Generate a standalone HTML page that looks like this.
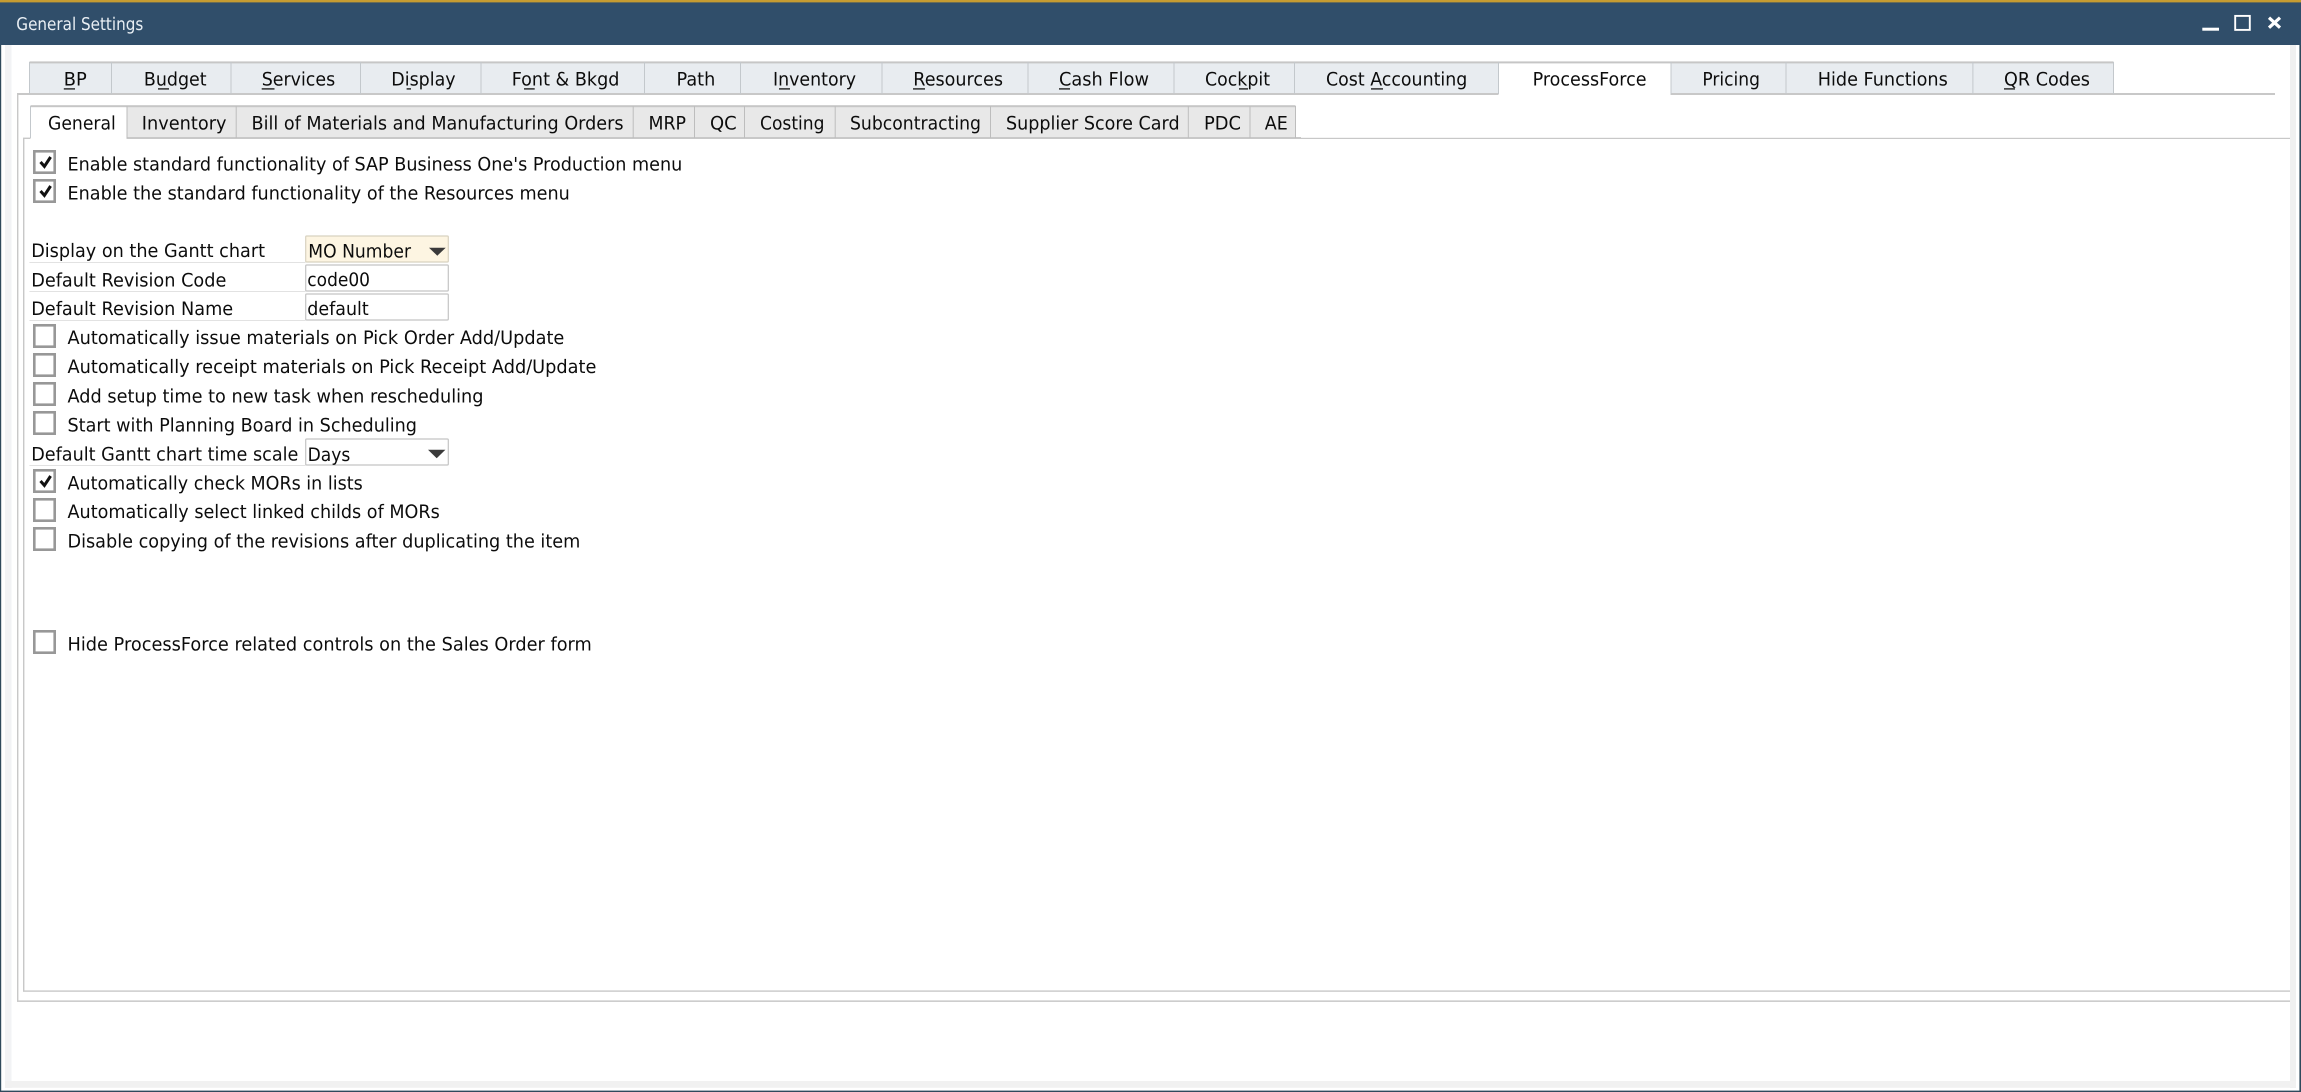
<!DOCTYPE html>
<html lang="en"><head><meta charset="utf-8"><title>General Settings</title>
<style>
html,body{margin:0;padding:0;background:#fff;width:2301px;height:1092px;overflow:hidden}
svg{display:block}
text{font-family:"DejaVu Sans",sans-serif;font-size:18.6px;fill:#0c0c0c;text-rendering:geometricPrecision}
.mt{fill:#e8ecf0}
.st{fill:#e8e8e8}
.cb{fill:#fff;stroke:#989898;stroke-width:2.6}
.ck{fill:none;stroke:#111;stroke-width:3}
.u{fill:#222}
.sep{fill:#c3c8cc}
.ln{fill:#c8c8c8}
.lab{fill:#e2e2e2}
.fld{fill:#fff;stroke:#c4c4c4;stroke-width:1.2}
</style></head><body>
<svg width="2301" height="1092" viewBox="0 0 2301 1092" xmlns="http://www.w3.org/2000/svg">
<rect width="2301" height="1092" fill="#fff"/>
<!-- window frame -->
<rect x="0" y="0" width="1.2" height="1092" fill="#2f4a5c"/>
<rect x="2299.4" y="0" width="1.6" height="1092" fill="#2f4a5c"/>
<rect x="0" y="1090.6" width="2301" height="1.4" fill="#2f4a5c"/>
<rect x="5" y="45" width="6.5" height="1043" fill="#f2f3f5"/>
<rect x="2290" y="45" width="6" height="1043" fill="#f0f0f0"/>
<rect x="5" y="1081" width="2291" height="6.8" fill="#f1f1f1"/>
<!-- title bar -->
<rect x="0" y="0" width="2301" height="45" fill="#304e6a"/>
<rect x="0" y="0" width="2301" height="2.4" fill="#c69c31"/>
<text x="16.3" y="30" textLength="127" lengthAdjust="spacingAndGlyphs" style="fill:#e9eff4;font-size:17.5px">General Settings</text>
<rect x="2202.3" y="27.7" width="16.7" height="3" fill="#fff"/>
<rect x="2235.2" y="15.9" width="14.6" height="14" fill="none" stroke="#fff" stroke-width="1.9"/>
<path d="M2269 17.7L2280 27.7M2280 17.7L2269 27.7" stroke="#fff" stroke-width="3.2" fill="none"/>
<!-- main tabs -->
<rect x="29.5" y="62" width="2084" height="32" class="mt"/>
<rect x="1498.5" y="62" width="172" height="34" fill="#fff"/>
<rect x="29.5" y="61.4" width="2084" height="2" fill="#c6c6c6"/>
<rect x="17" y="93" width="1481.5" height="2" class="ln"/>
<rect x="1670.5" y="93" width="604.5" height="2" class="ln"/>
<rect x="29" y="62" width="1" height="32" class="sep"/>
<rect x="111" y="62" width="1" height="32" class="sep"/>
<rect x="230.5" y="62" width="1" height="32" class="sep"/>
<rect x="360" y="62" width="1" height="32" class="sep"/>
<rect x="480.5" y="62" width="1" height="32" class="sep"/>
<rect x="644" y="62" width="1" height="32" class="sep"/>
<rect x="740" y="62" width="1" height="32" class="sep"/>
<rect x="881.5" y="62" width="1" height="32" class="sep"/>
<rect x="1027.5" y="62" width="1" height="32" class="sep"/>
<rect x="1173.5" y="62" width="1" height="32" class="sep"/>
<rect x="1294" y="62" width="1" height="32" class="sep"/>
<rect x="1498" y="62" width="1" height="32" class="sep"/>
<rect x="1670.5" y="62" width="1" height="32" class="sep"/>
<rect x="1785.5" y="62" width="1" height="32" class="sep"/>
<rect x="1972.4" y="62" width="1" height="32" class="sep"/>
<rect x="2113" y="62" width="1" height="32" class="sep"/>
<text x="63.8" y="85.5" textLength="23" lengthAdjust="spacingAndGlyphs">BP</text>
<text x="143.9" y="85.5" textLength="62.7" lengthAdjust="spacingAndGlyphs">Budget</text>
<text x="261.7" y="85.5" textLength="73.5" lengthAdjust="spacingAndGlyphs">Services</text>
<text x="391.3" y="85.5" textLength="64.3" lengthAdjust="spacingAndGlyphs">Display</text>
<text x="511.7" y="85.5" textLength="107.7" lengthAdjust="spacingAndGlyphs">Font &amp; Bkgd</text>
<text x="676.5" y="85.5" textLength="38.8" lengthAdjust="spacingAndGlyphs">Path</text>
<text x="773" y="85.5" textLength="83" lengthAdjust="spacingAndGlyphs">Inventory</text>
<text x="913.3" y="85.5" textLength="89.7" lengthAdjust="spacingAndGlyphs">Resources</text>
<text x="1059" y="85.5" textLength="90" lengthAdjust="spacingAndGlyphs">Cash Flow</text>
<text x="1205" y="85.5" textLength="65" lengthAdjust="spacingAndGlyphs">Cockpit</text>
<text x="1326" y="85.5" textLength="141.3" lengthAdjust="spacingAndGlyphs">Cost Accounting</text>
<text x="1532.6" y="85.5" textLength="113.9" lengthAdjust="spacingAndGlyphs">ProcessForce</text>
<text x="1702.4" y="85.5" textLength="57.6" lengthAdjust="spacingAndGlyphs">Pricing</text>
<text x="1817.7" y="85.5" textLength="130.1" lengthAdjust="spacingAndGlyphs">Hide Functions</text>
<text x="2004" y="85.5" textLength="86" lengthAdjust="spacingAndGlyphs">QR Codes</text>
<!-- underlined mnemonics -->
<rect x="63.8" y="88.2" width="11.2" height="1.4" class="u"/>
<rect x="158" y="88.2" width="11" height="1.4" class="u"/>
<rect x="261.7" y="88.2" width="12.8" height="1.4" class="u"/>
<rect x="406.6" y="88.2" width="4.4" height="1.4" class="u"/>
<rect x="524" y="88.2" width="10.7" height="1.4" class="u"/>
<rect x="779" y="88.2" width="11" height="1.4" class="u"/>
<rect x="913" y="88.2" width="12" height="1.4" class="u"/>
<rect x="1059" y="88.2" width="11" height="1.4" class="u"/>
<rect x="1239" y="88.2" width="9" height="1.4" class="u"/>
<rect x="1371" y="88.2" width="12" height="1.4" class="u"/>
<rect x="2004" y="88.2" width="11" height="1.4" class="u"/>
<!-- outer panel -->
<rect x="17" y="94" width="1.4" height="907.5" class="ln"/>
<rect x="17" y="1000.4" width="2273" height="1.5" class="ln"/>
<!-- sub tabs -->
<rect x="126.5" y="106" width="1169" height="32" class="st"/>
<rect x="30.5" y="105.2" width="1265" height="2" fill="#c6c6c6"/>
<rect x="23" y="137.6" width="7.5" height="1.4" class="ln"/>
<rect x="126.5" y="137" width="1174.5" height="2" class="ln"/>
<rect x="1301" y="137.8" width="989" height="1.2" class="ln"/>
<rect x="30" y="106" width="1" height="32" class="sep"/>
<rect x="126.5" y="106" width="1" height="32" fill="#bdbdbd"/>
<rect x="235.7" y="106" width="1" height="32" fill="#bdbdbd"/>
<rect x="632.7" y="106" width="1" height="32" fill="#bdbdbd"/>
<rect x="694" y="106" width="1" height="32" fill="#bdbdbd"/>
<rect x="744" y="106" width="1" height="32" fill="#bdbdbd"/>
<rect x="834.7" y="106" width="1" height="32" fill="#bdbdbd"/>
<rect x="990" y="106" width="1" height="32" fill="#bdbdbd"/>
<rect x="1187.8" y="106" width="1" height="32" fill="#bdbdbd"/>
<rect x="1249.5" y="106" width="1" height="32" fill="#bdbdbd"/>
<rect x="1295" y="106" width="1" height="32" fill="#bdbdbd"/>
<text x="48" y="129.5" textLength="67.8" lengthAdjust="spacingAndGlyphs">General</text>
<text x="141.8" y="129.5" textLength="84.7" lengthAdjust="spacingAndGlyphs">Inventory</text>
<text x="251.5" y="129.5" textLength="372" lengthAdjust="spacingAndGlyphs">Bill of Materials and Manufacturing Orders</text>
<text x="648.5" y="129.5" textLength="37.5" lengthAdjust="spacingAndGlyphs">MRP</text>
<text x="710" y="129.5" textLength="26.7" lengthAdjust="spacingAndGlyphs">QC</text>
<text x="760" y="129.5" textLength="64.5" lengthAdjust="spacingAndGlyphs">Costing</text>
<text x="850" y="129.5" textLength="131" lengthAdjust="spacingAndGlyphs">Subcontracting</text>
<text x="1006" y="129.5" textLength="173.6" lengthAdjust="spacingAndGlyphs">Supplier Score Card</text>
<text x="1204" y="129.5" textLength="37" lengthAdjust="spacingAndGlyphs">PDC</text>
<text x="1264.8" y="129.5" textLength="23" lengthAdjust="spacingAndGlyphs">AE</text>
<!-- inner panel -->
<rect x="23" y="138" width="1.4" height="853.6" class="ln"/>
<rect x="23" y="990.4" width="2267" height="1.4" class="ln"/>
<!-- checkboxes -->
<rect x="34.3" y="151.3" width="20.4" height="21.4" class="cb"/><path class="ck" d="M40.5 162L44.4 166.4L50.6 157"/>
<rect x="34.3" y="180.3" width="20.4" height="21.4" class="cb"/><path class="ck" d="M40.5 191L44.4 195.4L50.6 186"/>
<rect x="34.3" y="325.3" width="20.4" height="21.4" class="cb"/>
<rect x="34.3" y="354.3" width="20.4" height="21.4" class="cb"/>
<rect x="34.3" y="383.3" width="20.4" height="21.4" class="cb"/>
<rect x="34.3" y="412.3" width="20.4" height="21.4" class="cb"/>
<rect x="34.3" y="470.3" width="20.4" height="21.4" class="cb"/><path class="ck" d="M40.5 481L44.4 485.4L50.6 476"/>
<rect x="34.3" y="499.3" width="20.4" height="21.4" class="cb"/>
<rect x="34.3" y="528.3" width="20.4" height="21.4" class="cb"/>
<rect x="34.3" y="631.3" width="20.4" height="21.4" class="cb"/>
<!-- labels -->
<text x="67.5" y="170.7" textLength="614.8" lengthAdjust="spacingAndGlyphs">Enable standard functionality of SAP Business One's Production menu</text>
<text x="67.5" y="199.7" textLength="502.3" lengthAdjust="spacingAndGlyphs">Enable the standard functionality of the Resources menu</text>
<text x="31.2" y="257" textLength="233.8" lengthAdjust="spacingAndGlyphs">Display on the Gantt chart</text>
<text x="31.2" y="286.3" textLength="195.2" lengthAdjust="spacingAndGlyphs">Default Revision Code</text>
<text x="31.2" y="315" textLength="202" lengthAdjust="spacingAndGlyphs">Default Revision Name</text>
<text x="67.5" y="344" textLength="496.8" lengthAdjust="spacingAndGlyphs">Automatically issue materials on Pick Order Add/Update</text>
<text x="67.5" y="373" textLength="528.9" lengthAdjust="spacingAndGlyphs">Automatically receipt materials on Pick Receipt Add/Update</text>
<text x="67.5" y="402.7" textLength="416" lengthAdjust="spacingAndGlyphs">Add setup time to new task when rescheduling</text>
<text x="67.5" y="431.7" textLength="349.5" lengthAdjust="spacingAndGlyphs">Start with Planning Board in Scheduling</text>
<text x="31.2" y="460.7" textLength="267.2" lengthAdjust="spacingAndGlyphs">Default Gantt chart time scale</text>
<text x="67.5" y="489.3" textLength="295.2" lengthAdjust="spacingAndGlyphs">Automatically check MORs in lists</text>
<text x="67.5" y="518" textLength="372.3" lengthAdjust="spacingAndGlyphs">Automatically select linked childs of MORs</text>
<text x="67.5" y="547.7" textLength="512.8" lengthAdjust="spacingAndGlyphs">Disable copying of the revisions after duplicating the item</text>
<text x="67.5" y="650.7" textLength="524.3" lengthAdjust="spacingAndGlyphs">Hide ProcessForce related controls on the Sales Order form</text>
<!-- label separators -->
<rect x="29.4" y="262" width="276" height="1" class="lab"/>
<rect x="29.4" y="291" width="276" height="1" class="lab"/>
<rect x="29.4" y="320" width="276" height="1" class="lab"/>
<rect x="29.4" y="465" width="276" height="1" class="lab"/>
<!-- fields -->
<rect x="305.7" y="236" width="142.6" height="26" rx="1" class="fld" style="fill:#fdf5e2;stroke:#d8d2c0"/>
<path d="M429 247.7H445.7L437.3 255.7Z" fill="#3a3a3a"/>
<text x="308.3" y="257.3" textLength="102.7" lengthAdjust="spacingAndGlyphs">MO Number</text>
<rect x="305.7" y="265" width="142.6" height="26" rx="1" class="fld"/>
<text x="307.3" y="286" textLength="62.7" lengthAdjust="spacingAndGlyphs">code00</text>
<rect x="305.7" y="294" width="142.6" height="26" rx="1" class="fld"/>
<text x="307.3" y="315" textLength="61.4" lengthAdjust="spacingAndGlyphs">default</text>
<rect x="305.7" y="439" width="142.6" height="26" rx="1" class="fld"/>
<path d="M428 449.7H445.4L436.7 458.3Z" fill="#3a3a3a"/>
<text x="307.6" y="461" textLength="42.7" lengthAdjust="spacingAndGlyphs">Days</text>
</svg>
</body></html>
